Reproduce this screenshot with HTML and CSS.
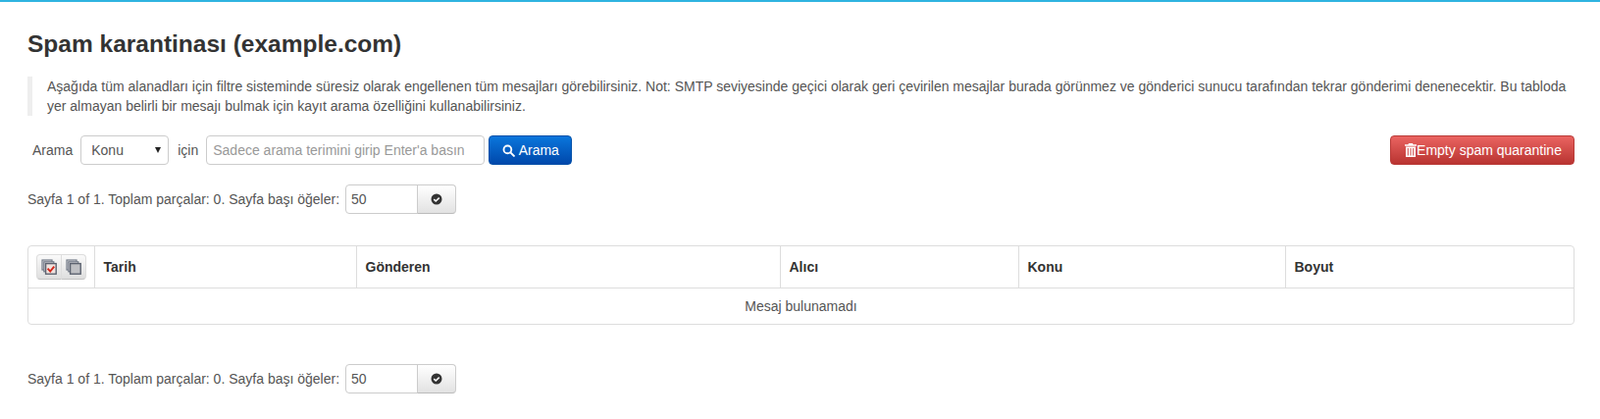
FILE: index.html
```html
<!DOCTYPE html>
<html lang="tr">
<head>
<meta charset="utf-8">
<title>Spam karantinası</title>
<link rel="stylesheet" href="styles.css">
</head>
<body>
<main class="page">
  <h1 class="title">Spam karantinası (example.com)</h1>
  <blockquote class="note">Aşağıda tüm alanadları için filtre sisteminde süresiz olarak engellenen tüm mesajları görebilirsiniz. Not: SMTP seviyesinde geçici olarak geri çevirilen mesajlar burada görünmez ve gönderici sunucu tarafından tekrar gönderimi denenecektir. Bu tabloda yer almayan belirli bir mesajı bulmak için kayıt arama özelliğini kullanabilirsiniz.</blockquote>

  <div class="toolbar">
    <form class="search">
      <span class="label">Arama</span>
      <div class="select"><span>Konu</span><i class="caret"></i></div>
      <span class="label">için</span>
      <div class="input search-input">Sadece arama terimini girip Enter'a basın</div>
      <button type="button" class="btn btn-blue">
        <svg class="ico-search" viewBox="0 0 14 14" aria-hidden="true"><circle cx="5.8" cy="5.8" r="4.2" fill="none" stroke="#fff" stroke-width="2"/><path d="M9 9l3.8 3.8" stroke="#fff" stroke-width="2.2" stroke-linecap="round"/></svg>
        Arama
      </button>
    </form>
    <button type="button" class="btn btn-red">
      <svg class="ico-trash" viewBox="0 0 12 14" aria-hidden="true"><path fill="#fff" d="M4 0h4l.5 1.3H12v1.4H0V1.3h3.5zM1 3.5h10V14H1zM2.8 5v7.5h1V5zm2.7 0v7.5h1V5zm2.7 0v7.5h1V5z" fill-rule="evenodd"/></svg>Empty spam quarantine
    </button>
  </div>

  <div class="pager">
    <span>Sayfa 1 of 1. Toplam parçalar: 0. Sayfa başı öğeler:</span>
    <div class="group">
      <div class="input pager-input">50</div>
      <button type="button" class="addon" aria-label="Uygula">
        <svg viewBox="0 0 12 12" class="ico-ok" aria-hidden="true"><circle cx="6" cy="6" r="5.5" fill="#333"/><path d="M3.3 6.2l1.9 1.8 3.5-3.4" fill="none" stroke="#fff" stroke-width="1.6"/></svg>
      </button>
    </div>
  </div>

  <div class="table-wrap">
    <table class="grid">
      <thead>
        <tr>
          <th class="c-check">
            <div class="check-group">
              <button type="button" class="check-btn" aria-label="Tümünü seç">
                <svg viewBox="0 0 16 16" aria-hidden="true">
                  <rect x="1" y="1" width="10" height="10" fill="#e4e4e6" stroke="#737b88" stroke-width="1.2"/>
                  <rect x="2.8" y="2.8" width="10" height="10" fill="#d8d8da" stroke="#737b88" stroke-width="1.2"/>
                  <rect x="4.6" y="4.6" width="10.6" height="10.6" fill="#efe3df" stroke="#5d6370" stroke-width="1.4"/>
                  <path d="M6.6 9.6l2.6 3 4-5" fill="none" stroke="#d3261a" stroke-width="1.9"/>
                </svg>
              </button>
              <button type="button" class="check-btn" aria-label="Seçimi kaldır">
                <svg viewBox="0 0 16 16" aria-hidden="true">
                  <rect x="1" y="1" width="10" height="10" fill="#e4e4e6" stroke="#737b88" stroke-width="1.2"/>
                  <rect x="2.8" y="2.8" width="10" height="10" fill="#d8d8da" stroke="#737b88" stroke-width="1.2"/>
                  <rect x="4.6" y="4.6" width="10.6" height="10.6" fill="#bfc0c4" stroke="#5d6370" stroke-width="1.4"/>
                </svg>
              </button>
            </div>
          </th>
          <th class="c-date">Tarih</th>
          <th class="c-from">Gönderen</th>
          <th class="c-to">Alıcı</th>
          <th class="c-subject">Konu</th>
          <th>Boyut</th>
        </tr>
      </thead>
      <tbody>
        <tr><td colspan="6" class="empty">Mesaj bulunamadı</td></tr>
      </tbody>
    </table>
  </div>

  <div class="pager pager-bottom">
    <span>Sayfa 1 of 1. Toplam parçalar: 0. Sayfa başı öğeler:</span>
    <div class="group">
      <div class="input pager-input">50</div>
      <button type="button" class="addon" aria-label="Uygula">
        <svg viewBox="0 0 12 12" class="ico-ok" aria-hidden="true"><circle cx="6" cy="6" r="5.5" fill="#333"/><path d="M3.3 6.2l1.9 1.8 3.5-3.4" fill="none" stroke="#fff" stroke-width="1.6"/></svg>
      </button>
    </div>
  </div>
</main>
</body>
</html>
```
FILE: styles.css
```css
* { box-sizing: border-box; }
html, body { margin: 0; }
body {
  height: 427px;
  overflow: hidden;
  background: #fff;
  border-top: 2px solid #2fb4e0;
  font-family: "Liberation Sans", Arial, sans-serif;
  font-size: 14px;
  line-height: 20px;
  color: #555;
}
.page { padding: 0 26px 0 28px; }
.title {
  margin: 28px 0 0;
  font-size: 24.5px;
  line-height: 30px;
  font-weight: 700;
  color: #333;
}
.note {
  margin: 18px 0 0;
  padding: 0 0 0 15px;
  border-left: 5px solid #eee;
  color: #555;
}
.toolbar {
  margin-top: 20px;
  display: flex;
  justify-content: space-between;
  align-items: center;
}
.search { display: flex; align-items: center; padding-left: 5px; }
.label { margin-right: 8px; }
.select {
  width: 90px;
  height: 30px;
  margin-right: 9px;
  padding: 0 10px;
  display: flex;
  align-items: center;
  justify-content: space-between;
  border: 1px solid #ccc;
  border-radius: 4px;
  background: #fff;
}
.caret {
  width: 0; height: 0;
  margin-right: -3px;
  border-left: 3.5px solid transparent;
  border-right: 3.5px solid transparent;
  border-top: 6px solid #222;
}
.input {
  height: 30px;
  display: flex;
  align-items: center;
  border: 1px solid #ccc;
  border-radius: 4px;
  background: #fff;
}
.search-input {
  width: 284px;
  padding-left: 6px;
  margin-right: 4px;
  color: #999;
  white-space: nowrap;
  overflow: hidden;
}
.btn {
  height: 30px;
  padding: 0;
  display: inline-flex;
  align-items: center;
  justify-content: center;
  border-radius: 4px;
  color: #fff;
  font: inherit;
}
.btn-blue {
  width: 85px;
  gap: 4px;
  border: 1px solid #0350a8;
  background: linear-gradient(#0a76dc, #0048ab);
}
.btn-red {
  width: 188px;
  padding-left: 2px;
  border: 1px solid #b93a37;
  background: linear-gradient(#ea6461, #b93431);
}
.ico-search { width: 13px; height: 13px; }
.ico-trash { width: 12px; height: 14px; }
.pager {
  margin-top: 20px;
  display: flex;
  align-items: center;
  gap: 6px;
}
.pager-bottom { margin-top: 40px; }
.group { display: flex; }
.pager-input {
  width: 74px;
  padding-left: 5px;
  border-radius: 4px 0 0 4px;
}
.addon {
  width: 40px;
  height: 30px;
  margin-left: -1px;
  padding: 0;
  display: flex;
  align-items: center;
  justify-content: center;
  border: 1px solid #ccc;
  border-bottom-color: #bbb;
  border-radius: 0 4px 4px 0;
  background: linear-gradient(#fff, #e2e2e2);
}
.ico-ok { width: 12px; height: 12px; }
.table-wrap {
  margin-top: 32px;
  border: 1px solid #ddd;
  border-radius: 4px;
  overflow: hidden;
}
.grid {
  width: 100%;
  table-layout: fixed;
  border-collapse: collapse;
}
.grid th {
  height: 42px;
  padding: 0 8px 0 9px;
  border-left: 1px solid #ddd;
  border-bottom: 1px solid #ddd;
  text-align: left;
  font-weight: 700;
  color: #333;
}
.grid th:first-child { border-left: 0; }
.c-check { width: 67px; }
.c-date { width: 267px; }
.c-from { width: 432px; }
.c-to { width: 243px; }
.c-subject { width: 272px; }
.grid th.c-check { padding: 0 0 0 8px; }
.check-group { display: flex; width: 51px; }
.check-btn {
  width: 26px;
  height: 26px;
  padding: 4px 4px;
  border: 1px solid #ddd;
  border-bottom-color: #c4c4c4;
  background: linear-gradient(#fafafa, #dedede);
  border-radius: 4px 0 0 4px;
}
.check-btn + .check-btn { margin-left: -1px; border-radius: 0 4px 4px 0; }
.check-btn svg { display: block; width: 16px; height: 16px; }
.empty {
  height: 37px;
  padding: 0;
  text-align: center;
  color: #555;
}
```
